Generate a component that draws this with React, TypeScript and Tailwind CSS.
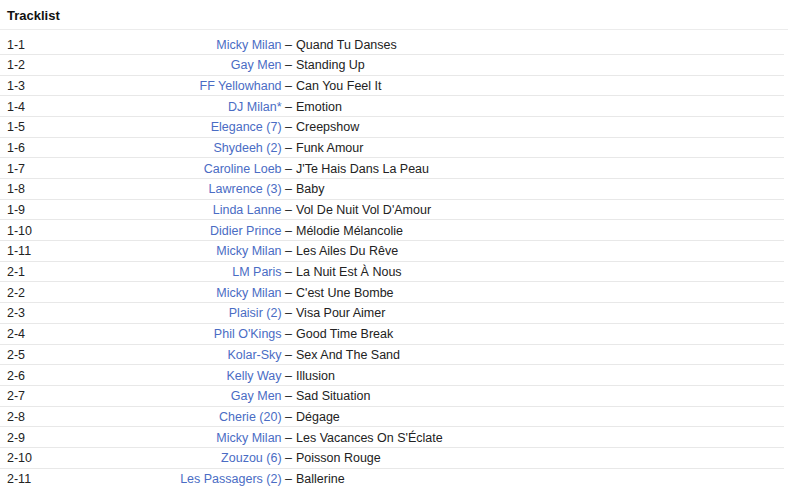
const tracks: [string, string, string][] = [
  ["1-1", "Micky Milan", "Quand Tu Danses"],
  ["1-2", "Gay Men", "Standing Up"],
  ["1-3", "FF Yellowhand", "Can You Feel It"],
  ["1-4", "DJ Milan*", "Emotion"],
  ["1-5", "Elegance (7)", "Creepshow"],
  ["1-6", "Shydeeh (2)", "Funk Amour"],
  ["1-7", "Caroline Loeb", "J'Te Hais Dans La Peau"],
  ["1-8", "Lawrence (3)", "Baby"],
  ["1-9", "Linda Lanne", "Vol De Nuit Vol D'Amour"],
  ["1-10", "Didier Prince", "Mélodie Mélancolie"],
  ["1-11", "Micky Milan", "Les Ailes Du Rêve"],
  ["2-1", "LM Paris", "La Nuit Est À Nous"],
  ["2-2", "Micky Milan", "C'est Une Bombe"],
  ["2-3", "Plaisir (2)", "Visa Pour Aimer"],
  ["2-4", "Phil O'Kings", "Good Time Break"],
  ["2-5", "Kolar-Sky", "Sex And The Sand"],
  ["2-6", "Kelly Way", "Illusion"],
  ["2-7", "Gay Men", "Sad Situation"],
  ["2-8", "Cherie (20)", "Dégage"],
  ["2-9", "Micky Milan", "Les Vacances On S'Éclate"],
  ["2-10", "Zouzou (6)", "Poisson Rouge"],
  ["2-11", "Les Passagers (2)", "Ballerine"],
];

export default function App() {
  return (
    <div className="w-[800px] h-[499px] bg-white text-[#222] font-['Liberation_Sans',Arial,sans-serif] overflow-hidden">
      <h2 className="w-[788px] h-[30px] border-b border-[#ececec] pl-[7px] pt-[8px] text-[13px] leading-[16px] font-bold text-[#111]">
        Tracklist
      </h2>
      <div className="mt-[4.2px] w-[784px]">
        {tracks.map(([pos, artist, title], i) => (
          <div
            key={pos}
            className={`flex items-center h-[20.7px] pt-[1px] text-[12.5px] leading-[14px] ${
              i < tracks.length - 1 ? "border-b border-[#e8e8e8]" : ""
            }`}
          >
            <span className="w-[57px] pl-[7px] shrink-0">{pos}</span>
            <span className="w-[235px] shrink-0 text-right whitespace-nowrap">
              <a className="text-[#4a6cc4]">{artist}</a> –
            </span>
            <span className="pl-[4px] whitespace-nowrap">{title}</span>
          </div>
        ))}
      </div>
    </div>
  );
}
